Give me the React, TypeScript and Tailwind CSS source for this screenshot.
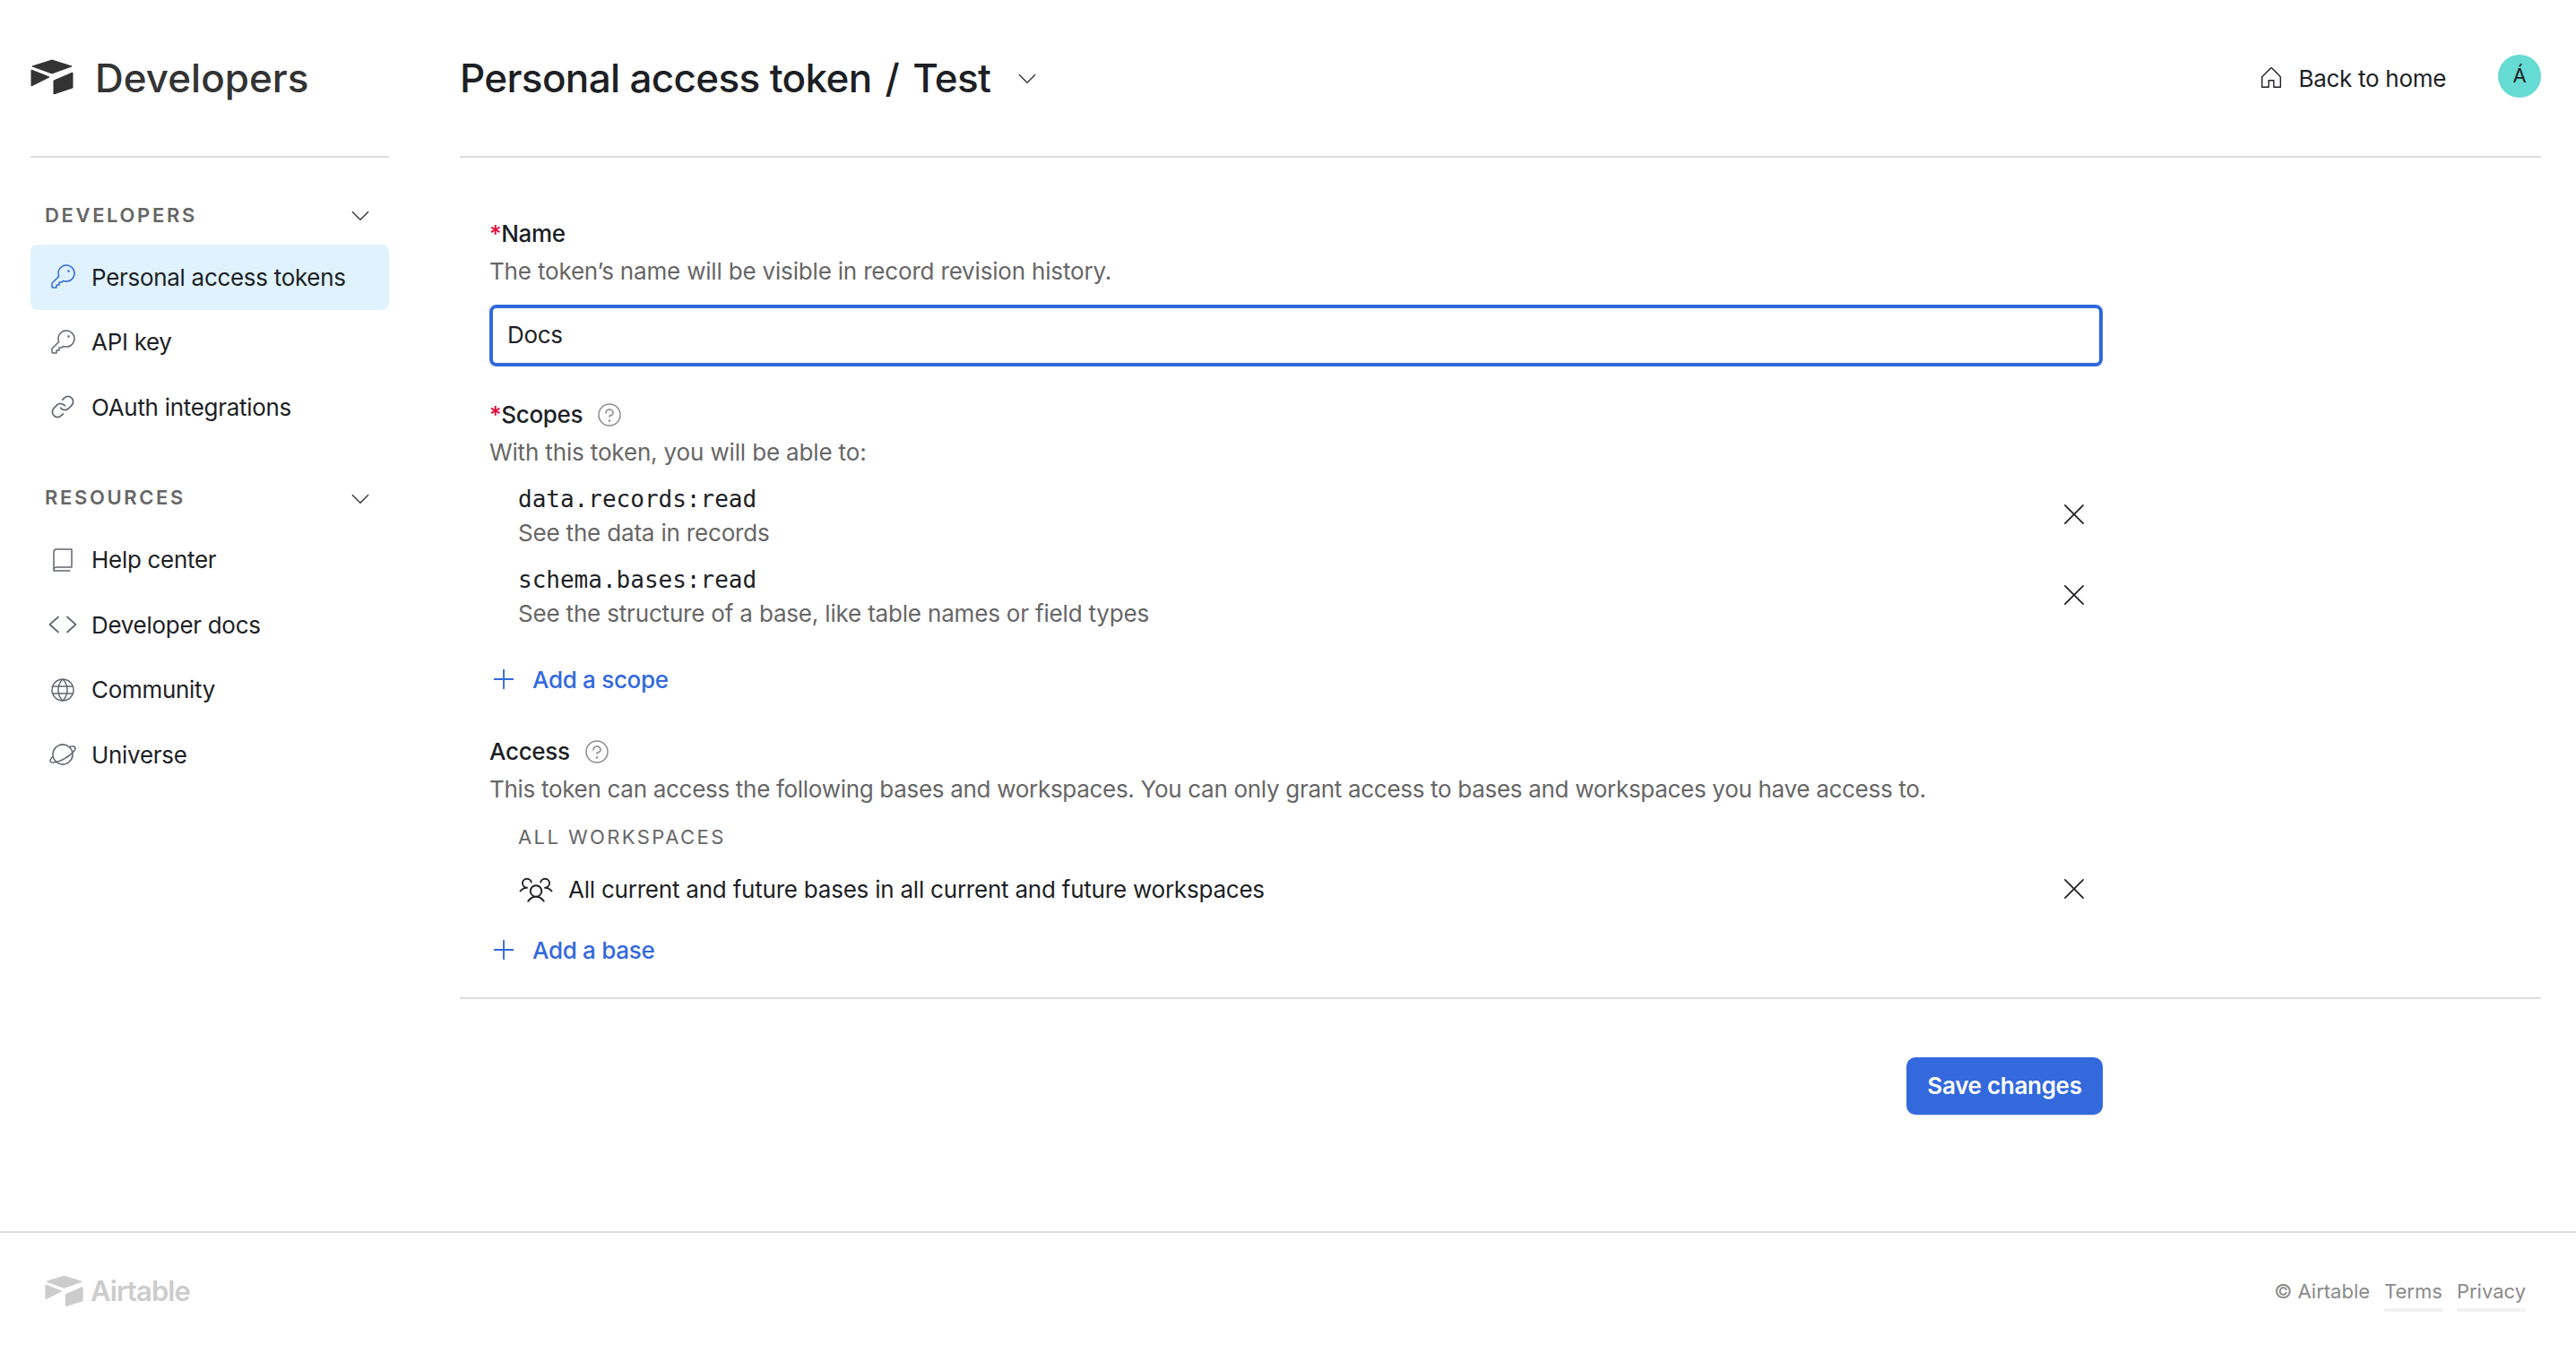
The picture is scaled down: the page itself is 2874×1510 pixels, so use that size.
import React from 'react';
import { Link } from 'lucide-react';
import {
  PiKeyLight,
  PiBookLight,
  PiGlobeLight,
  PiPlanetLight,
  PiCaretDownLight,
  PiHouseLight,
  PiQuestionLight,
  PiXLight,
  PiPlus,
  PiUsersThreeLight,
} from 'react-icons/pi';

const Logo = ({ className }: { className: string }) => (
  <svg viewBox="0 0 48 40" className={className} fill="currentColor" stroke="currentColor" strokeWidth="1" strokeLinejoin="round">
    <path d="M24 1 L46 8 L24 16 L2 8 Z" />
    <path d="M26 24 L47 15 L47 32 L26 39 Z" />
    <path d="M1 12 L21 20 L1 30 Z" />
  </svg>
);

// angle brackets only, the icon set's version has a slash through it
const CodeIcon = ({ className }: { className: string }) => (
  <svg viewBox="0 0 32 32" className={className} fill="none" stroke="currentColor" strokeWidth="1.7" strokeLinecap="round" strokeLinejoin="round">
    <path d="M11 7.5 L1.5 16 L11 24.5" />
    <path d="M21 7.5 L30.5 16 L21 24.5" />
  </svg>
);

const LinkIcon = ({ className }: { className: string }) => (
  <span className={`${className} flex items-center justify-center`}>
    <Link className="w-[28px] h-[28px]" strokeWidth={1.5} />
  </span>
);

const SectionHeader = ({ label, className }: { label: string; className: string }) => (
  <div className={`mb-[11px] h-[44px] pl-[16px] pr-[18px] flex items-center justify-between ${className}`}>
    <span className="text-[22px] font-semibold tracking-[0.12em] text-[#666666]">{label}</span>
    <PiCaretDownLight className="w-[28px] h-[28px] text-[#333333]" />
  </div>
);

const NavItem = ({ icon: Icon, label, active }: { icon: any; label: string; active?: boolean }) => (
  <div className={`h-[72.5px] pl-[20px] flex items-center gap-[16px] rounded-[8px] text-[26px] text-[#1d1f25] ${active ? 'bg-[#e0f2fe]' : ''}`}>
    <Icon className={`w-[32px] h-[32px] ${active ? 'text-[#3369dd]' : 'text-[#616670]'}`} />
    <span>{label}</span>
  </div>
);

const Sidebar = () => (
  <aside className="w-[400px] ml-[34px]">
    <div className="h-[176px] border-b-2 border-[#dddddd] flex items-center gap-[24px]">
      <Logo className="w-[48px] h-[40px] text-[#333333] mb-[2px]" />
      <span className="text-[44px] font-medium tracking-normal text-[#333333]">Developers</span>
    </div>
    <SectionHeader label="DEVELOPERS" className="mt-[42px]" />
    <NavItem icon={PiKeyLight} label="Personal access tokens" active />
    <NavItem icon={PiKeyLight} label="API key" />
    <NavItem icon={LinkIcon} label="OAuth integrations" />
    <SectionHeader label="RESOURCES" className="mt-[43px]" />
    <NavItem icon={PiBookLight} label="Help center" />
    <NavItem icon={CodeIcon} label="Developer docs" />
    <NavItem icon={PiGlobeLight} label="Community" />
    <NavItem icon={PiPlanetLight} label="Universe" />
  </aside>
);

const Label = ({ children, required, help }: { children: React.ReactNode; required?: boolean; help?: boolean }) => (
  <div className="h-[36px] pb-[2px] flex items-center text-[26px] font-medium text-[#1d1f25]">
    {required && <span className="text-[#dc043b]">*</span>}
    <span>{children}</span>
    {help && <PiQuestionLight className="ml-[14px] mt-[2px] w-[32px] h-[32px] text-[#8a8a8a]" />}
  </div>
);

const Hint = ({ children, className = 'tracking-[-0.18px]' }: { children: React.ReactNode; className?: string }) => (
  <div className={`h-[36px] pb-[2px] flex items-center text-[26px] text-[#666666] ${className}`}>{children}</div>
);

const Scope = ({ name, text, className }: { name: string; text: string; className: string }) => (
  <div className={`flex items-center justify-between pl-[32px] pr-[14px] ${className}`}>
    <div>
      <div className="h-[36px] flex items-center text-[26px] tracking-normal text-[#1d1f25] font-['DejaVu_Sans_Mono',monospace]">{name}</div>
      <Hint className="mt-[2px] tracking-[-0.18px]">{text}</Hint>
    </div>
    <PiXLight className="w-[36px] h-[36px] mb-[4px] text-[#1d1f25]" />
  </div>
);

const AddLink = ({ label, className }: { label: string; className: string }) => (
  <div className={`h-[36px] pb-[2px] flex items-center gap-[17px] pl-[1px] text-[26px] font-medium text-[#3369dd] ${className}`}>
    <PiPlus className="w-[30px] h-[30px]" />
    <span>{label}</span>
  </div>
);

const Main = () => (
  <main className="w-[2322px] ml-[79px]">
    <div className="h-[176px] border-b-2 border-[#dddddd] flex items-center justify-between">
      <div className="flex items-center text-[44px] font-[450] tracking-[-0.65px] text-[#1d1f25]">
        <span>Personal access token</span>
        <span className="mx-[15px]">/</span>
        <span>Test</span>
        <PiCaretDownLight className="ml-[27px] w-[28px] h-[28px] text-[#333333]" />
      </div>
      <div className="flex items-center">
        <PiHouseLight className="w-[30px] h-[30px] text-[#1d1f25]" />
        <span className="ml-[16px] text-[26px] text-[#1d1f25]">Back to home</span>
        <div className="ml-[58px] mb-[5px] w-[48px] h-[48px] rounded-full bg-[#66dbd3] flex items-center justify-center text-[22px] text-[#1d1f25]">Á</div>
      </div>
    </div>

    <div className="h-[939px] border-b-2 border-[#dddddd] pl-[33px] pt-[67px]">
      <div className="w-[1800px]">
        <Label required>Name</Label>
        <Hint className="mt-[6px] tracking-[-0.18px]">The token’s name will be visible in record revision history.</Hint>
        <div className="mt-[19px] h-[69px] pb-[2px] border-4 border-[#3069db] rounded-[8px] flex items-center pl-[16px] text-[26px] text-[#1d1f25]">Docs</div>

        <div className="mt-[36px]">
          <Label required help>Scopes</Label>
        </div>
        <Hint className="mt-[6px] tracking-[-0.15px]">With this token, you will be able to:</Hint>
        <Scope name="data.records:read" text="See the data in records" className="mt-[16px]" />
        <Scope name="schema.bases:read" text="See the structure of a base, like table names or field types" className="mt-[16px]" />
        <AddLink label="Add a scope" className="mt-[38px]" />

        <div className="mt-[44px]">
          <Label help>Access</Label>
        </div>
        <Hint className="mt-[6px] tracking-[-0.3px]">This token can access the following bases and workspaces. You can only grant access to bases and workspaces you have access to.</Hint>
        <div className="mt-[17px] h-[36px] flex items-center pl-[32px] text-[22px] tracking-[0.11em] text-[#666666]">ALL WORKSPACES</div>
        <div className="mt-[23px] h-[36px] flex items-center justify-between pl-[32px] pr-[14px]">
          <div className="flex items-center gap-[16px] pb-[2px] text-[26px] tracking-[-0.22px] text-[#1d1f25]">
            <PiUsersThreeLight className="w-[40px] h-[40px]" />
            <span>All current and future bases in all current and future workspaces</span>
          </div>
          <PiXLight className="w-[36px] h-[36px] mb-[2px] text-[#1d1f25]" />
        </div>
        <AddLink label="Add a base" className="mt-[32px]" />
      </div>
    </div>

    <div className="w-[1833px] mt-[65px] flex justify-end">
      <button className="h-[64px] w-[219px] pb-[2px] rounded-[10px] bg-[#3369dd] text-[26px] font-semibold text-white shadow-sm">Save changes</button>
    </div>
  </main>
);

const Footer = () => (
  <footer className="h-[136px] border-t-2 border-[#dddddd] flex items-center justify-between pl-[50px] pr-[56px] pb-[4px] tracking-normal">
    <div className="flex items-center gap-[8px] text-[#cccccc]">
      <Logo className="w-[43px] h-[36px]" />
      <span className="text-[31px] font-semibold tracking-[-0.03em]">Airtable</span>
    </div>
    <div className="flex items-center gap-[16px] text-[22px] text-[#8a8a8a]">
      <span>© Airtable</span>
      <span className="border-b-4 border-[#f2f2f2] pb-[2px] mt-[6px]">Terms</span>
      <span className="border-b-4 border-[#f2f2f2] pb-[2px] mt-[6px]">Privacy</span>
    </div>
  </footer>
);

export default function App() {
  return (
    <div className="w-full h-[1510px] bg-white font-['Inter',sans-serif] tracking-[-0.3px] overflow-hidden flex flex-col">
      <div className="h-[1374px] flex items-start">
        <Sidebar />
        <Main />
      </div>
      <Footer />
    </div>
  );
}
